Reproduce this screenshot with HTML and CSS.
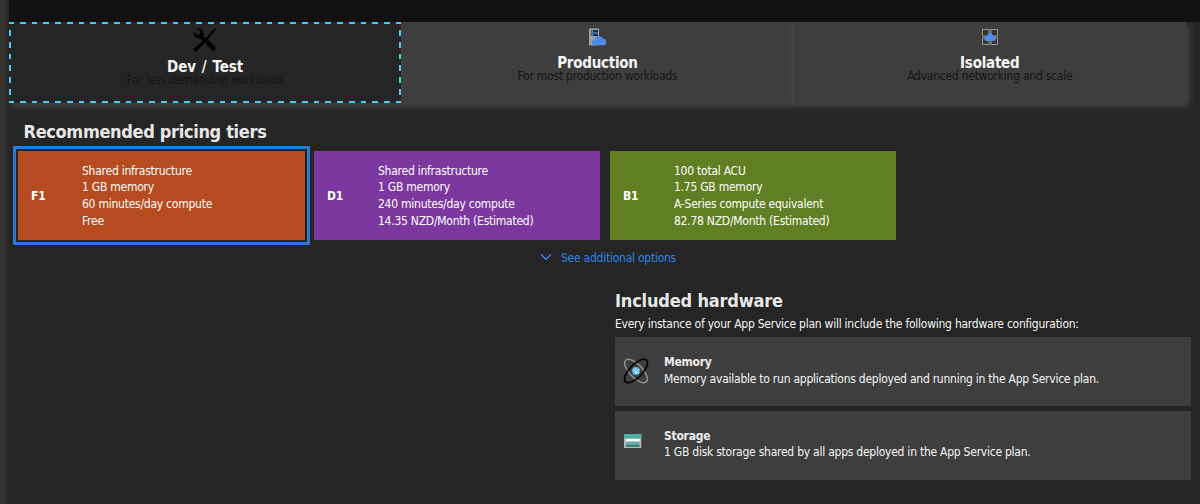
FILE: index.html
```html
<!DOCTYPE html>
<html lang="en">
<head>
<meta charset="utf-8">
<title>Pricing tier</title>
<link rel="stylesheet" href="styles.css">
</head>
<body>
<div class="page">
  <div class="edge"></div>
  <main class="blade">
    <div class="topbar"></div>
    <nav class="tabs">
      <div class="tab tab-active">
        <svg class="tab-icon tools" viewBox="0 0 24 24"><path d="M23 1.200 21.600 .6 13 9.600l-1.100 1.600 1.500 1.500 1.500-1.200z"/><path d="M13.200 13.400l2-1.700 7.100 7.400q1.200 1.600-.2 3-1.600 1.500-3.200.1l-6.200-6.800z"/><path d="M4.500.3 7.700 3.600 6.800 6.500 4 7 .9 4.100C.2 7.700 2.500 10.800 6.800 10.300L9.700 13 .8 20.700q-.7 1.200.2 2.200 1.200 1.100 2.600.3L14.300 12.500 10.300 8.500C11.600 4 9.300.2 4.500.3z"/></svg>
        <h3 class="tab-title">Dev / Test</h3>
        <p class="tab-sub">For less demanding workloads</p>
      </div>
      <div class="tab">
        <svg class="tab-icon" viewBox="0 0 18 18"><path d="M1 .5h10v17H1z" fill="#a0a0a0"/><path d="M3 2h7v2.500H3zM3 5.500h7V8H3z" fill="#073569"/><path d="M3.500 2.500H5V4H3.500zM3.500 6H5v1.500H3.500z" fill="#54aef0"/><path d="M7 17.300a3 3 0 0 1-.2-6 4.200 4.200 0 0 1 8-.8 3.400 3.400 0 0 1 .2 6.800z" fill="#4b8de5"/></svg>
        <h3 class="tab-title">Production</h3>
        <p class="tab-sub">For most production workloads</p>
      </div>
      <div class="tab">
        <svg class="tab-icon" viewBox="0 0 18 18"><path d="M1.500 1.500H8V8H1.500zM10 1.500h6.500V8H10zM1.500 10H8v6.500H1.500zM10 10h6.500v6.500H10z" fill="#353535" stroke="#969696"/><path d="M9 1v16M1 9h16" stroke="#707070" stroke-width="1.500"/><path d="M6 13a2.500 2.500 0 0 1-.5-5Q6.500 7.500 7 6q2-2.800 4 0 .5 1.500 1.500 2A2.500 2.500 0 0 1 12 13z" fill="#4b91e9"/></svg>
        <h3 class="tab-title">Isolated</h3>
        <p class="tab-sub">Advanced networking and scale</p>
      </div>
    </nav>
    <section class="tiers">
      <h2 class="heading head-tiers">Recommended pricing tiers</h2>
      <div class="cards">
        <div class="card orange selected"><b class="sku">F1</b><ul class="specs"><li>Shared infrastructure</li><li>1 GB memory</li><li>60 minutes/day compute</li><li>Free</li></ul></div>
        <div class="card purple"><b class="sku">D1</b><ul class="specs"><li>Shared infrastructure</li><li>1 GB memory</li><li>240 minutes/day compute</li><li>14.35 NZD/Month (Estimated)</li></ul></div>
        <div class="card green"><b class="sku">B1</b><ul class="specs"><li>100 total ACU</li><li>1.75 GB memory</li><li>A-Series compute equivalent</li><li>82.78 NZD/Month (Estimated)</li></ul></div>
      </div>
      <div class="more"><svg class="chevron" viewBox="0 0 12 8"><path d="M1 1.500 6 6.300 11 1.500" fill="none" stroke="#3b8df0" stroke-width="1.200"/></svg><span>See additional options</span></div>
    </section>
    <section class="hardware">
      <h2 class="heading head-hardware">Included hardware</h2>
      <p class="intro">Every instance of your App Service plan will include the following hardware configuration:</p>
      <div class="row">
        <svg class="row-icon" viewBox="0 0 26 26"><g fill="none"><ellipse cx="13" cy="13" rx="15" ry="6.500" transform="rotate(46 13 13)" stroke="#929292" stroke-width="1.500"/><ellipse cx="13" cy="13" rx="15" ry="6.500" transform="rotate(-46 13 13)" stroke="#000" stroke-width="1.700"/></g><circle cx="13" cy="13" r="4" fill="#54aee0"/><path d="M10 11.500l3 2.500 3-3M12 16l1-2 3 1M12 9.500l1 2" fill="none" stroke="#edf8ff"/></svg>
        <div><h4 class="row-title">Memory</h4><p>Memory available to run applications deployed and running in the App Service plan.</p></div>
      </div>
      <div class="row">
        <svg class="row-icon" viewBox="0 0 26 26"><path d="M1 3h17.300v14H1z" fill="#b7b9b9"/><path d="M1 3h17.300v4.200H1z" fill="#4bb09e"/><path d="M3 8h13.500v2.200H3z" fill="#fff"/><path d="M3 11h13.500v1.700H3z" fill="#4ab7a6"/><path d="M3 13.500h13.500v2.300H3z" fill="#257f76"/></svg>
        <div><h4 class="row-title">Storage</h4><p>1 GB disk storage shared by all apps deployed in the App Service plan.</p></div>
      </div>
    </section>
  </main>
</div>
</body>
</html>
```

FILE: styles.css
```css
* { box-sizing: border-box; margin: 0; padding: 0; }
body {
  background: #252525;
  color: #f5f5f5;
  font: 12px/16.7px "DejaVu Sans Condensed", "DejaVu Sans", sans-serif;
  font-stretch: condensed;
  letter-spacing: -0.245px;
  white-space: nowrap;
  overflow: hidden;
}
.page { display: flex; height: 504px; }
.edge { width: 9px; background: linear-gradient(90deg, #33322f 40%, #272625); }
.blade { flex: 1; min-width: 0; }
.topbar { height: 22px; background: #111; }
.tabs { display: flex; width: 1177px; height: 81px; box-shadow: 3px 3px 7px #484848; clip-path: inset(0 -12px -12px 0); }
.tab { flex: 0 0 392.3px; display: flex; flex-direction: column; align-items: center; padding-top: 6px; background: #3e3e3e; }
.tab + .tab + .tab { box-shadow: -2px 0 4px #484848; }
.tab-active {
  --dash: #50c8f5 0 5.9px, transparent 5.9px 11.75px;
  background:
    repeating-linear-gradient(90deg, var(--dash)) -1px 0 / 410px 2px no-repeat,
    repeating-linear-gradient(90deg, var(--dash)) -1px 100% / 410px 2px no-repeat,
    repeating-linear-gradient(180deg, var(--dash)) 0 -3.7px / 2px 100px no-repeat,
    repeating-linear-gradient(180deg, var(--dash)) 100% -3.7px / 2px 100px no-repeat,
    #252525;
}
.tab-icon { width: 18px; height: 18px; }
.tools { width: 24px; height: 24px; fill: #000; }
.tab-title { font-size: 15px; line-height: 18px; margin-top: 8px; letter-spacing: -0.25px; }
.tab-active .tab-title { margin-top: 6px; letter-spacing: 0; word-spacing: 1px; }
.tab-sub { color: #151515; font-size: 12px; line-height: 16px; margin-top: -4px; }
.tiers { padding: 18px 0 0 9px; }
.heading { color: #e8e8e8; font-size: 18px; line-height: 22px; letter-spacing: -0.33px; }
.head-tiers { margin-left: 5.500px; }
.head-hardware { letter-spacing: -0.18px; }
.cards { display: flex; gap: 10px; margin-top: 8px; }
.card { width: 286px; height: 89px; display: flex; align-items: center; padding: 1px 0 0 13px; color: #fff; }
.selected { width: 287px; margin-right: -1px; outline: 3px solid #2b79d0; outline-offset: 2px; }
.orange { background: #b54b1e; }
.purple { background: #7c389f; }
.green { background: #617e23; }
.sku { width: 51px; }
.specs { list-style: none; }
.more { display: flex; align-items: center; gap: 9px; margin: 10px 0 0 522px; color: #2f83e5; }
.chevron { width: 12px; height: 8px; margin-top: -2px; }
.hardware { padding: 23px 9px 0 606px; }
.intro { margin: 4px 0 5px; }
.row { display: flex; align-items: center; gap: 15px; height: 68.600px; margin-bottom: 5px; padding: 0 0 2px 8px; background: #3e3e3e; }
.row-icon { width: 26px; height: 26px; }
.row-title { font-size: 12px; color: #eee; }
```
